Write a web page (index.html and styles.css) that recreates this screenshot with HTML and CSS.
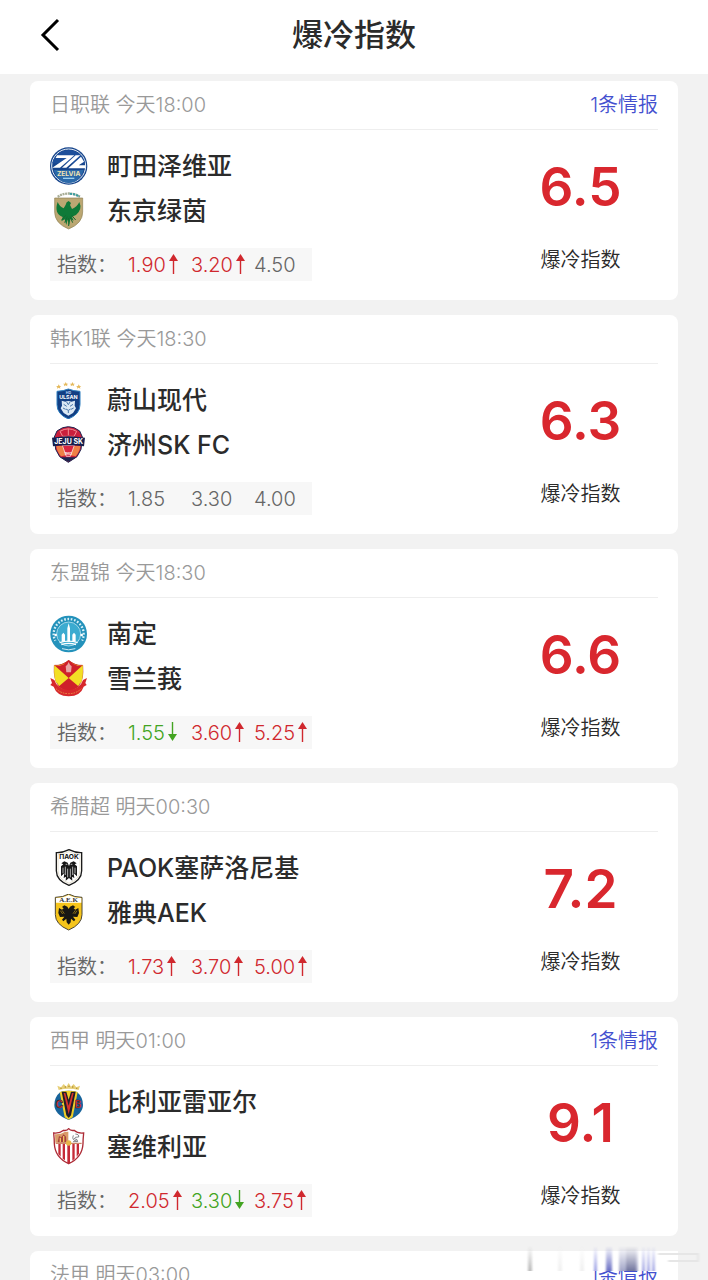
FILE: index.html
```html
<!DOCTYPE html>
<html lang="zh-CN">
<head>
  <meta charset="UTF-8">
  <meta name="viewport" content="width=device-width, initial-scale=1.0">
  <title>爆冷指数</title>
  <link rel="stylesheet" href="styles.css">
</head>
<body>
  <!-- shared shapes -->
  <svg class="defs" width="0" height="0" aria-hidden="true">
    <defs>
      <symbol id="up" viewBox="0 0 9 20"><path d="M4.500 0L9 7H0z"/><path d="M3.800 6h1.400v14H3.800z"/></symbol>
      <symbol id="down" viewBox="0 0 9 20"><path d="M4.500 19L9 12H0z"/><path d="M3.800 0h1.400v14H3.800z"/></symbol>
      <linearGradient id="fade" x1="0" y1="0" x2="0" y2="1">
        <stop offset="0" stop-color="#fff" stop-opacity="0"/>
        <stop offset="1" stop-color="#fff"/>
      </linearGradient>
      <mask id="fadeMask"><rect width="200" height="25" fill="url(#fade)"/></mask>
      <filter id="soft"><feGaussianBlur stdDeviation="1 0"/></filter>
    </defs>
  </svg>

  <header class="topbar">
    <button class="back" aria-label="返回">
      <svg width="20" height="34" viewBox="0 0 20 34"><path d="M18 2L3 17l15 15" fill="none" stroke="#000" stroke-width="3"/></svg>
    </button>
    <h1>爆冷指数</h1>
  </header>

  <main class="list">
    <section class="card">
      <div class="card-head"><span>日职联 今天18:00</span><a href="#">1条情报</a></div>
      <div class="card-body">
        <div class="match">
          <div class="team">
            <svg class="logo" viewBox="30 21 112 114">
              <circle cx="85" cy="78" r="56" fill="#17458c"/>
              <circle cx="85" cy="78" r="51" fill="none" stroke="#e8f0f8" stroke-width="3"/>
              <path d="M36 70a50 50 0 0 1 98 0z" fill="#1d4f9b"/>
              <path d="M50 46h52L59 83H36l43-29H46zM106 46h14L78 83H65zM122 50l9 15-16 11h21l-2 9H84z" fill="#fff"/>
              <path d="M40 90h90q-12 39-45 39T40 90z" fill="#2b69a9"/>
              <text x="85" y="108" class="logo-text" font-size="20" fill="#f0e4b4">ZELVIA</text>
              <path d="M68 115h34" stroke="#9bd0ef" stroke-width="4"/>
            </svg>
            <span>町田泽维亚</span>
          </div>
          <div class="team">
            <svg class="logo" viewBox="30 160 112 114">
              <path d="M52 174q32-19 67 0" fill="none" stroke="#a8ad96" stroke-width="7" stroke-dasharray="6 2"/>
              <path d="M88 165q17 1 30 9" fill="none" stroke="#3a9da0" stroke-width="6" stroke-dasharray="7 3"/>
              <path d="M43 178h84v42q0 34-42 51-42-17-42-51z" fill="#bba772" stroke="#8e8055" stroke-width="2"/>
              <path d="M52 190q6 14 18 19 6-8 9-18l6-4 7 6-3 6 6 12q15-6 22-21 10 22-10 39l-12 5 5 12-10-5-3 18-5-16-4 16-5-17-10 6 4-13q-27-11-15-45z" fill="#0e7a38"/>
              <path d="M64 244l12-14m30 14-12-14M73 252l8-18m16 18-8-18M85 262v-24" stroke="#14692f" stroke-width="3"/>
            </svg>
            <span>东京绿茵</span>
          </div>
          <div class="odds"><span class="odds-label">指数：</span><span class="odd rise">1.90<svg class="arrow"><use href="#up"/></svg></span><span class="odd rise">3.20<svg class="arrow"><use href="#up"/></svg></span><span class="odd">4.50</span></div>
        </div>
        <div class="score"><strong>6.5</strong><span>爆冷指数</span></div>
      </div>
    </section>

    <section class="card">
      <div class="card-head"><span>韩K1联 今天18:30</span></div>
      <div class="card-body">
        <div class="match">
          <div class="team">
            <svg class="logo" viewBox="30 27 112 114">
              <path d="M53 42l2-5 3 5 5 0-4 3 1 5-5-3-5 3 1-5-4-3zM74 35l2-5 3 5 5 0-4 3 1 5-5-3-5 3 1-5-4-3zM94 35l2-5 3 5 5 0-4 3 1 5-5-3-5 3 1-5-4-3zM113 42l2-5 3 5 5 0-4 3 1 5-5-3-5 3 1-5-4-3z" fill="#e5b95b"/>
              <path d="M50 58q20-1 34-7 15 6 35 7v40q0 29-35 43-34-14-34-43z" fill="#123e83" stroke="#2f7fc0" stroke-width="3"/>
              <text x="84" y="67" class="logo-text" font-size="11" fill="#b9d6f2">HD</text>
              <text x="84" y="80" class="logo-text" font-size="16" fill="#fff">ULSAN</text>
              <path d="M64 86l11 3q9-4 18 0l11-3-1 15 4 8-9 14-14 8-14-8-9-14 4-8z" fill="#dbe8f4"/>
              <path d="M70 97l9 6M98 97l-9 6M77 111l7 4 7-4M84 115v8M68 108l8 4M100 108l-8 4M79 90l5 8 5-8" fill="none" stroke="#4a76a8" stroke-width="3"/>
            </svg>
            <span>蔚山现代</span>
          </div>
          <div class="team">
            <svg class="logo" viewBox="30 166 112 114">
              <path d="M84 168q18 0 34 13l8 18-4 37-12 22-26 17-26-17-12-22-4-37 8-18q16-13 34-13z" fill="#c91f3c" stroke="#1d2450" stroke-width="3"/>
              <path d="M59 182q25-15 50 0l-8 15H67zM84 174v20" fill="none" stroke="#f28d94" stroke-width="3"/>
              <path d="M48 226h20l10 28-16 3q-12-14-14-31zM120 226h-20l-10 28 16 3q12-14 14-31z" fill="#ef8047"/>
              <path d="M60 260h48l-24 13z" fill="#1d2450"/>
              <path d="M66 224l12 33h12l12-33z" fill="#d92540" stroke="#fff" stroke-width="2"/>
              <path d="M35 201q49-9 99 0l-3 26q-47-7-93 0z" fill="#171f4d"/>
              <text x="85" y="220" class="logo-text" font-size="21" fill="#fff">JEJU SK</text>
              <text x="84" y="252" class="logo-text" font-size="9" fill="#fff">1982</text>
            </svg>
            <span>济州SK FC</span>
          </div>
          <div class="odds"><span class="odds-label">指数：</span><span class="odd">1.85</span><span class="odd">3.30</span><span class="odd">4.00</span></div>
        </div>
        <div class="score"><strong>6.3</strong><span>爆冷指数</span></div>
      </div>
    </section>

    <section class="card">
      <div class="card-head"><span>东盟锦 今天18:30</span></div>
      <div class="card-body">
        <div class="match">
          <div class="team">
            <svg class="logo" viewBox="30 27 112 114">
              <circle cx="85" cy="84" r="55" fill="#2492bb"/>
              <circle cx="85" cy="84" r="45" fill="none" stroke="#d9f0f7" stroke-width="7" stroke-dasharray="5 5" stroke-dashoffset="3"/>
              <path d="M43 105a48 48 0 0 0 84 0" fill="none" stroke="#2492bb" stroke-width="12"/>
              <circle cx="85" cy="84" r="36" fill="#3cabd0" stroke="#d9f0f7" stroke-width="2"/>
              <path d="M81 107V67l4-15 4 15v40zM64 107V86l5-6 5 6v21zM96 107V86l5-6 5 6v21z" fill="#fff"/>
              <path d="M58 110q27-9 54 0M63 116q22-8 44 0" fill="none" stroke="#fff" stroke-width="4"/>
              <path d="M65 128q20 7 40 0" fill="none" stroke="#cfeaf3" stroke-width="3"/>
              <circle cx="46" cy="87" r="4" fill="#fff"/><circle cx="124" cy="87" r="4" fill="#fff"/>
            </svg>
            <span>南定</span>
          </div>
          <div class="team">
            <svg class="logo" viewBox="30 166 112 114">
              <path d="M42 182q22 2 43-15 20 17 42 15 4 43-12 62l-30 19-30-19q-16-19-13-62z" fill="#f3df25" stroke="#b62127" stroke-width="2"/>
              <path d="M42 182q22 2 43-15 20 17 42 15L85 220z" fill="#cf202a"/>
              <path d="M42 182q22 2 30-6l13 44-38 14q-7-22-5-52zM127 182q-22 2-30-6l-12 44 38 14q6-22 4-52z" fill="#f3df25"/>
              <path d="M42 182l43 38 42-38-15 1q-16-3-27-16-12 14-28 16z" fill="#cf202a"/>
              <path d="M85 220l31 26-31 17-31-17z" fill="#cf202a"/>
              <path d="M85 172l4 8 5 5-2 18H78l-2-18 5-5z" fill="#e9a5a2"/>
              <path d="M30 220l12 6q8 26 43 31 35-5 43-31l12-6-5 15 4 6-9 5q-9 28-45 29-36-1-45-29l-10-5 5-6z" fill="#d7282c"/>
              <path d="M47 252q15 15 38 15t38-15" fill="none" stroke="#e98a44" stroke-width="3" stroke-dasharray="5 3"/>
            </svg>
            <span>雪兰莪</span>
          </div>
          <div class="odds"><span class="odds-label">指数：</span><span class="odd fall">1.55<svg class="arrow"><use href="#down"/></svg></span><span class="odd rise">3.60<svg class="arrow"><use href="#up"/></svg></span><span class="odd rise">5.25<svg class="arrow"><use href="#up"/></svg></span></div>
        </div>
        <div class="score"><strong>6.6</strong><span>爆冷指数</span></div>
      </div>
    </section>

    <section class="card">
      <div class="card-head"><span>希腊超 明天00:30</span></div>
      <div class="card-body">
        <div class="match">
          <div class="team">
            <svg class="logo" viewBox="30 27 112 114">
              <path d="M48 38q18 1 38-9 20 10 38 9v54q0 29-38 44-38-15-38-44z" fill="#fff" stroke="#1b1b1b" stroke-width="4"/>
              <path d="M53 43q17 0 33-8 16 8 33 8v48q0 26-33 39-33-13-33-39z" fill="none" stroke="#b9a772" stroke-width="1"/>
              <text x="86" y="58" class="logo-text" font-size="20" fill="#111">ΠΑΟΚ</text>
              <path d="M82 68l-10-4-9 6 6 3-7 6v30l10-9-2 14 7-4-1 12 10-8 10 8-1-12 7 4-2-14 10 9V79l-7-6 6-3-9-6-10 4-4 10z" fill="#171717"/>
              <path d="M68 83v17M75 80v25M82 86v26M90 86v26M97 80v25M104 83v17M76 73h5M91 73h5" stroke="#fff" stroke-width="2"/>
            </svg>
            <span>PAOK塞萨洛尼基</span>
          </div>
          <div class="team">
            <svg class="logo" viewBox="30 166 112 114">
              <path d="M45 176q24 0 40-10 17 10 40 10v52q0 29-40 46-40-17-40-46z" fill="#f6c51c" stroke="#4d4635" stroke-width="3"/>
              <path d="M47 178q22 0 38-9 16 9 38 9v14H47z" fill="#fff"/>
              <text x="85" y="190" class="logo-serif" font-size="21" fill="#333">A.E.K</text>
              <path d="M81 204l-9-4-7 5 5 4-5 4-9-5-2 15 5 12 13-1-7 9 4 5 9-8 1 11 6 7 6-7 1-11 9 8 4-5-7-9 13 1 5-12-2-15-9 5-5-4 5-4-7-5-9 4-4 7z" fill="#171714"/>
              <path d="M60 216l7 10M65 215l7 10M110 216l-7 10M105 215l-7 10" stroke="#c79c18" stroke-width="2"/>
            </svg>
            <span>雅典AEK</span>
          </div>
          <div class="odds"><span class="odds-label">指数：</span><span class="odd rise">1.73<svg class="arrow"><use href="#up"/></svg></span><span class="odd rise">3.70<svg class="arrow"><use href="#up"/></svg></span><span class="odd rise">5.00<svg class="arrow"><use href="#up"/></svg></span></div>
        </div>
        <div class="score"><strong>7.2</strong><span>爆冷指数</span></div>
      </div>
    </section>

    <section class="card">
      <div class="card-head"><span>西甲 明天01:00</span><a href="#">1条情报</a></div>
      <div class="card-body">
        <div class="match">
          <div class="team">
            <svg class="logo" viewBox="30 27 112 114">
              <path d="M55 48l-4-13 11 5 8-10 8 8 7-11 7 11 8-8 8 10 11-5-4 13q-30-7-60 0z" fill="#e7cf77"/>
              <path d="M60 43h4M73 39h4M84 37h4M95 39h4M107 43h4" stroke="#b59534" stroke-width="4"/>
              <path d="M60 54q26-7 50 0 18 15 18 39 0 28-43 45-43-17-43-45 0-24 18-39z" fill="#17639b"/>
              <path d="M58 54q27-7 54 0l-15 76-12 7-12-7z" fill="#f0ce27"/>
              <path d="M64 53h14l7 24 7-24h14l-14 71-7 8-7-8z" fill="#221d27"/>
              <path d="M70 57h5l10 38 10-38h5l-15 64z" fill="#d8322c"/>
              <text x="57" y="103" class="logo-text" font-size="30" fill="#df2f2b" stroke="#16212e" stroke-width="1">C</text>
              <text x="113" y="103" class="logo-text" font-size="30" fill="#df2f2b" stroke="#16212e" stroke-width="1">B</text>
            </svg>
            <span>比利亚雷亚尔</span>
          </div>
          <div class="team">
            <svg class="logo" viewBox="30 166 112 114">
              <path d="M40 181q18 2 30-8 10 2 15-5 6 7 16 5 11 10 29 8-2 19-2 32-2 41-43 60-41-19-43-60 0-13-2-32z" fill="#fff"/>
              <path d="M54 214h7v38l-7-8zM67 214h7v49l-7-5zM81 214h8v57h-8zM96 214h7v44l-7 6zM109 214h7v29l-7 9z" fill="#c52a37"/>
              <path d="M44 185q18 1 29-7l11-1v33H45z" fill="#d99b69"/>
              <path d="M52 209l4-19 7 4 7-9 7 7 1 17z" fill="#a8403c"/>
              <path d="M60 195v13M70 190v18" stroke="#efc55e" stroke-width="4"/>
              <path d="M105 184q12 1 10 9-12-1-13 5 11 1 10 9h-14M99 188q-6 15 10 17" fill="none" stroke="#49484e" stroke-width="2"/>
              <path d="M46 212h78" stroke="#c5704b" stroke-width="3"/>
              <circle cx="85" cy="211" r="8" fill="#e7b547"/>
              <path d="M40 181q18 2 30-8 10 2 15-5 6 7 16 5 11 10 29 8-2 19-2 32-2 41-43 60-41-19-43-60 0-13-2-32z" fill="none" stroke="#ad2b36" stroke-width="4"/>
            </svg>
            <span>塞维利亚</span>
          </div>
          <div class="odds"><span class="odds-label">指数：</span><span class="odd rise">2.05<svg class="arrow"><use href="#up"/></svg></span><span class="odd fall">3.30<svg class="arrow"><use href="#down"/></svg></span><span class="odd rise">3.75<svg class="arrow"><use href="#up"/></svg></span></div>
        </div>
        <div class="score"><strong>9.1</strong><span>爆冷指数</span></div>
      </div>
    </section>

    <section class="card">
      <div class="card-head"><span>法甲 明天03:00</span><a href="#">1条情报</a></div>
    </section>
  </main>

  <!-- streaks in the bottom corner -->
  <svg class="streaks" width="200" height="25" viewBox="0 0 200 25" aria-hidden="true">
    <path d="M20 5h150v20H20z" fill="#fff"/>
    <g mask="url(#fadeMask)" filter="url(#soft)">
      <path d="M20 0h4v25h-4z" fill="#bbb"/>
      <path d="M50 0h4v25h-4zM72 0h4v25h-4z" fill="#f0f0f0"/>
      <path d="M86 0h3v25h-3z" fill="#9a9fe4"/>
      <path d="M98 0h6v25h-6z" fill="#6b70c4"/>
      <path d="M111 0h19v25h-19z" fill="#a3a6c8"/>
      <path d="M118 0h10v25h-10z" fill="#71749d"/>
      <path d="M134 0h3v25h-3zM139 0h3v25h-3zM144 0h3v25h-3z" fill="#a5a9e4"/>
    </g>
    <path d="M150 8h40v7h-30" fill="none" stroke="#e6e6e6" stroke-width="2" filter="url(#soft)"/>
  </svg>
</body>
</html>
```
FILE: styles.css
```css
* {
  box-sizing: border-box;
}

body {
  margin: 0;
  height: 100vh;
  overflow: hidden;
  position: relative;
  background-color: #f2f2f2;
  color: #2b2b2b;
  font-family: Inter, "Noto Sans CJK SC", sans-serif;
  font-size: 20px;
}

.defs {
  position: absolute;
}

/* top bar */
.topbar {
  display: grid;
  grid-template-columns: 80px 1fr 80px;
  align-items: center;
  height: 74px;
  padding-bottom: 5px;
  background-color: #fff;
}

.topbar h1 {
  margin: 0;
  text-align: center;
  font-size: 31px;
  line-height: 40px;
  font-weight: 500;
}

.back {
  display: flex;
  padding: 0 0 0 40px;
  border: none;
  background: none;
  cursor: pointer;
}

/* match cards */
.list {
  display: flex;
  flex-direction: column;
  gap: 15px;
  padding: 7px 30px 0;
}

.card {
  padding: 0 20px;
  border-radius: 8px;
  background-color: #fff;
}

.card-head {
  display: flex;
  justify-content: space-between;
  height: 49px;
  line-height: 49px;
  border-bottom: 1px solid #eee;
  color: #999;
  font-weight: 350;
}

.card-head a {
  color: #4350cf;
  text-decoration: none;
}

.card-body {
  display: flex;
  justify-content: space-between;
  padding: 17px 0 19px;
}

.match {
  display: flex;
  flex-direction: column;
  gap: 7px;
}

.team {
  display: flex;
  align-items: center;
  gap: 19px;
  height: 38px;
  font-size: 25px;
  line-height: 38px;
  font-weight: 500;
}

.logo {
  width: 38px;
  height: 38px;
}

.logo-text {
  font-family: Inter, sans-serif;
  font-weight: 700;
  text-anchor: middle;
}

.logo-serif {
  font-family: "Liberation Serif", serif;
  font-weight: 700;
  text-anchor: middle;
}

.odds {
  display: flex;
  width: 262px;
  height: 33px;
  margin-top: 11px;
  padding-left: 7px;
  line-height: 35px;
  background-color: #f7f7f7;
  color: #666;
  font-weight: 350;
}

.odds-label {
  flex: none;
  width: 71px;
}

.odd {
  display: flex;
  flex: none;
  gap: 3px;
  width: 63px;
}

.odd:last-child {
  width: auto;
}

.rise {
  color: #d0282e;
}

.fall {
  color: #43a422;
}

.arrow {
  width: 9px;
  height: 20px;
  margin-top: 6px;
  fill: currentColor;
}

.score {
  display: flex;
  flex-direction: column;
  align-items: center;
  gap: 28px;
  width: 155px;
  padding-top: 10px;
}

.score strong {
  color: #d9272e;
  font-size: 53px;
  line-height: 60px;
  font-weight: 600;
}

.score span {
  line-height: 30px;
  font-weight: 350;
}

.streaks {
  position: absolute;
  right: 0;
  bottom: 9px;
}
```
